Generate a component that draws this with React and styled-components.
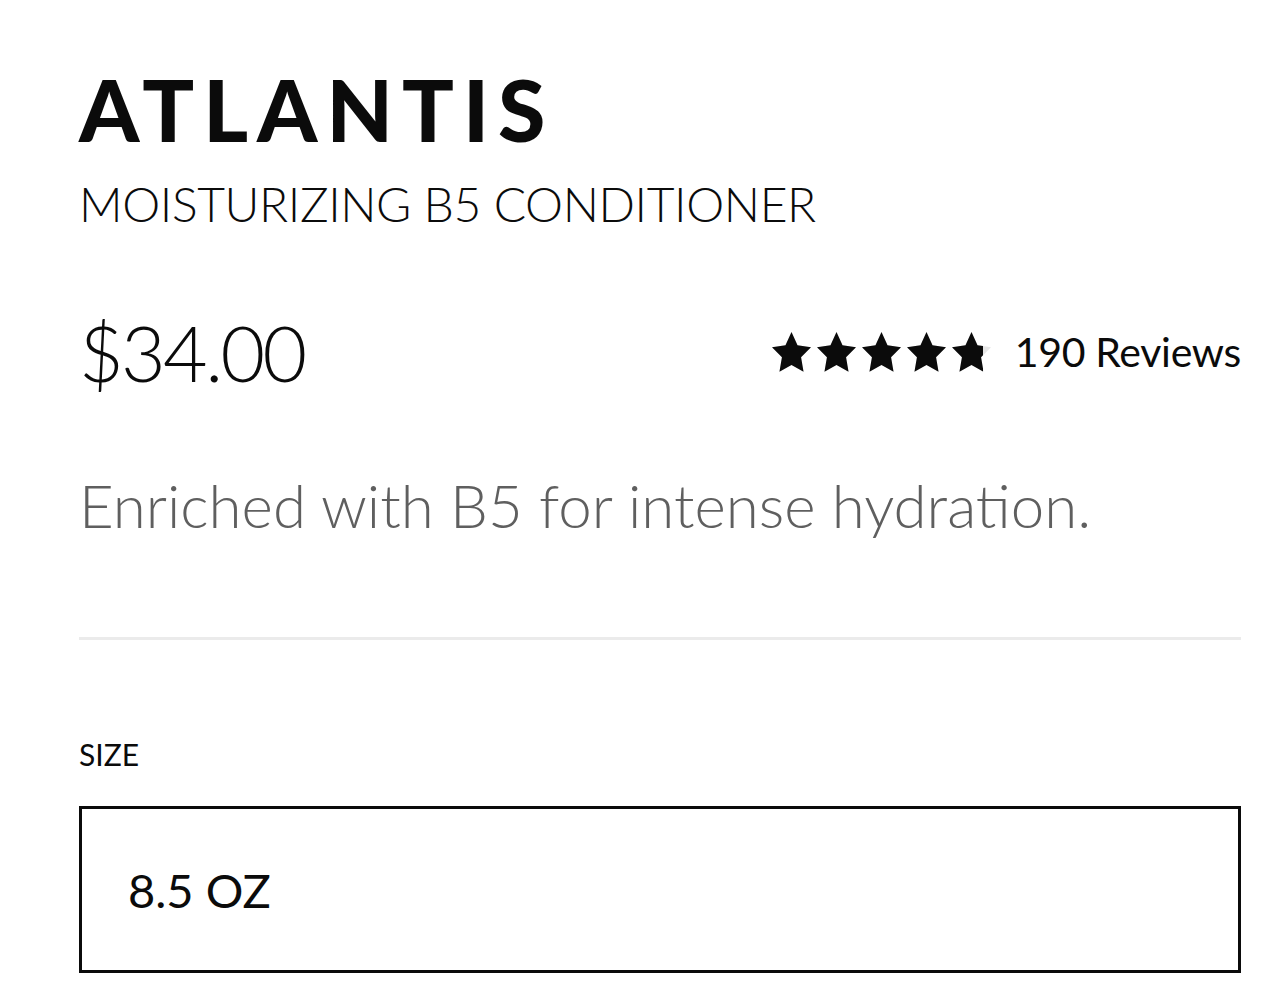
import React from "react";
import styled, { createGlobalStyle } from "styled-components";

const Global = createGlobalStyle`
  html, body { margin: 0; padding: 0; background: #fff; }
  body { font-family: "Lato", "Noto Sans", sans-serif; color: #0b0b0b; }
`;

const Page = styled.main`
  padding: 66px 22px 0 79px;
  display: flex;
  flex-direction: column;
`;

const Brand = styled.h1`
  margin: 0;
  font-family: "Lato", sans-serif;
  font-weight: 900;
  font-size: 86px;
  line-height: 86px;
  letter-spacing: 9px;
  color: #0b0b0b;
`;

const Subtitle = styled.h2`
  margin: 24px 0 0;
  font-weight: 300;
  font-size: 48px;
  line-height: 56px;
  letter-spacing: -0.4px;
  color: #0b0b0b;
`;

const PriceRow = styled.div`
  margin-top: 80px;
  display: flex;
  align-items: center;
  justify-content: space-between;
`;

const Price = styled.div`
  font-weight: 300;
  font-size: 77px;
  line-height: 80px;
  letter-spacing: -2.6px;
  color: #0b0b0b;
`;

const Rating = styled.div`
  display: flex;
  align-items: center;
  gap: 24px;
`;

const Stars = styled.div`
  display: flex;
  gap: 6px;
`;

const StarSlot = styled.span`
  position: relative;
  display: block;
  width: 39px;
  height: 40px;
`;

const StarFill = styled.span`
  position: absolute;
  inset: 0 auto 0 0;
  overflow: hidden;
  display: block;
`;

const ReviewCount = styled.span`
  font-size: 41px;
  line-height: 50px;
  letter-spacing: -0.3px;
  color: #0b0b0b;
`;

const Description = styled.p`
  margin: 78px 0 0;
  font-weight: 300;
  font-size: 60px;
  line-height: 70px;
  letter-spacing: 0;
  color: #5f5f5f;
`;

const Divider = styled.hr`
  margin: 97px 0 0;
  border: none;
  height: 3px;
  background: #ebebeb;
`;

const SizeLabel = styled.div`
  margin-top: 96px;
  font-weight: 400;
  font-size: 30px;
  line-height: 36px;
  color: #0b0b0b;
`;

const SizeBox = styled.div`
  margin-top: 34px;
  height: 161px;
  border: 3px solid #0b0b0b;
  display: flex;
  align-items: center;
  padding-left: 46px;
  font-size: 47px;
  color: #0b0b0b;
`;

const StarShape = ({ color }) => (
  <svg width="39" height="40" viewBox="1 0.8 22 21" preserveAspectRatio="none">
    <path
      d="M12 0.8l3.4 7 7.6 1-5.6 5.3 1.4 7.6L12 18.1l-6.8 3.6 1.4-7.6L1 8.8l7.6-1z"
      fill={color}
    />
  </svg>
);

const Star = ({ fill }) => (
  <StarSlot>
    <StarShape color="#e6e6e6" />
    <StarFill style={{ width: `${fill * 100}%` }}>
      <StarShape color="#0b0b0b" />
    </StarFill>
  </StarSlot>
);

export default function App() {
  const rating = 4.8;
  return (
    <>
      <Global />
      <Page>
        <Brand>ATLANTIS</Brand>
        <Subtitle>MOISTURIZING B5 CONDITIONER</Subtitle>
        <PriceRow>
          <Price>$34.00</Price>
          <Rating>
            <Stars>
              {[0, 1, 2, 3, 4].map((i) => (
                <Star key={i} fill={Math.max(0, Math.min(1, rating - i))} />
              ))}
            </Stars>
            <ReviewCount>190 Reviews</ReviewCount>
          </Rating>
        </PriceRow>
        <Description>Enriched with B5 for intense hydration.</Description>
        <Divider />
        <SizeLabel>SIZE</SizeLabel>
        <SizeBox>8.5 OZ</SizeBox>
      </Page>
    </>
  );
}
